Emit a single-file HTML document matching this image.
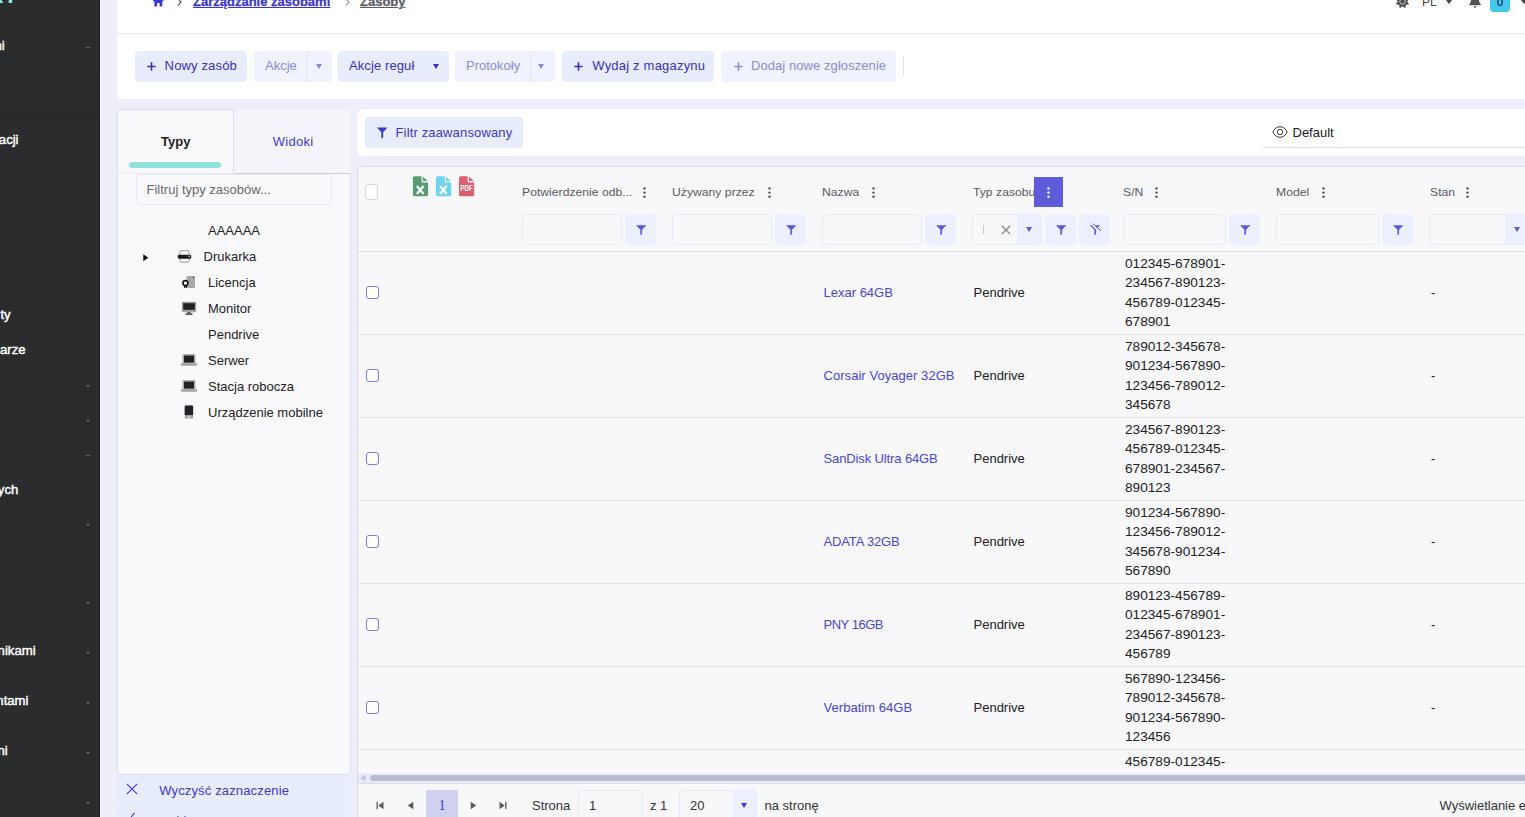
<!DOCTYPE html>
<html lang="pl">
<head>
<meta charset="utf-8">
<title>Zasoby</title>
<style>
*{box-sizing:border-box;margin:0;padding:0}
html,body{width:1525px;height:817px;overflow:hidden}
body{position:relative;background:#edeef7;font-family:"Liberation Sans",sans-serif;font-size:13px;color:#222;}
.abs{position:absolute}
/* sidebar */
#sidebar{position:absolute;left:0;top:0;width:100px;height:817px;background:#2b2c2e;overflow:hidden;box-shadow:inset -1px 0 0 #1d1e20}
#sidebar .t{position:absolute;white-space:nowrap;color:#fff;font-weight:normal;-webkit-text-stroke:0.45px #fff;font-size:13.700px;line-height:15.500px;transform:scaleX(0.96);transform-origin:100% 50%}
#sidebar .c{position:absolute;left:86px;width:0;height:0;border-left:2.500px solid transparent;border-right:2.500px solid transparent;border-top:2.500px solid #6f7072}
/* top panel */
#top{position:absolute;left:117px;top:0;width:1408px;height:99px;background:#fff;border-bottom-left-radius:4px;overflow:hidden}
#top .hr{position:absolute;left:0;top:33px;width:1408px;height:1px;background:#e3e3e3}
.bc{position:absolute;top:-6px;-webkit-text-stroke:0.25px currentColor;font-weight:bold;font-size:13px;line-height:16px;white-space:nowrap;text-decoration:underline;text-underline-offset:1px}
.btn{position:absolute;top:51px;height:31px;border-radius:4px;background:#e8edfd;color:#3431c4;font-size:13px;line-height:31px;white-space:nowrap}
.btn.dis{background:#f0f2fe;color:#8b8bdb}
.btn span{position:absolute;top:-1px}
.btn .split{position:absolute;top:0;width:1px;height:31px;background:#e6e8f8}
.caret{position:absolute;width:0;height:0;border-left:3.5px solid transparent;border-right:3.5px solid transparent;border-top:5px solid #3431c4}
.dis .caret{border-top-color:#8b8bdb}
.plus{position:absolute;width:9px;height:9px}
.plus:before{content:"";position:absolute;left:0.200px;top:3.600px;width:8.600px;height:1.700px;background:currentColor}
.plus:after{content:"";position:absolute;left:3.650px;top:0.200px;width:1.700px;height:8.600px;background:currentColor}

/* left panel */
#lp{position:absolute;left:117px;top:173px;width:234px;height:602px;background:#f9f9fc;border:1px solid #d9dcfb;border-radius:0 0 4px 4px}
#tab1{position:absolute;left:117px;top:109px;width:117px;height:65px;background:#f9f9fc;border:1px solid #d9dcfb;border-bottom:none;border-radius:4px 4px 0 0}
#tab2{position:absolute;left:234px;top:110px;width:117px;height:64px;background:#f4f4fa;border-bottom:1px solid #cfcfd4;border-radius:0 4px 0 0}
.tabt{position:absolute;top:134px;font-size:13px;line-height:16px;white-space:nowrap}
#tfilter{position:absolute;left:136px;top:174px;width:196px;height:31px;border:1px solid #e5e8fc;border-radius:4px;background:#f9f9fc;color:#68686e;font-size:13px;line-height:29px;padding-left:9.500px}
.tr{position:absolute;font-size:13px;line-height:16px;white-space:nowrap;color:#222}
.lbtn{position:absolute;left:117px;width:234px;background:#e8edfd;border-radius:4px;color:#3b38cc;font-size:13px}

/* filter panel */
#fp{position:absolute;left:357px;top:109px;width:1168px;height:47px;background:#fff;border-radius:6px 0 0 6px}
/* grid */
#grid{position:absolute;left:357px;top:166px;width:1180px;height:660px;background:#f8f8fb;border:1px solid #d9d9de;border-radius:5px 0 0 0}
.hl{position:absolute;left:358px;width:1167px;height:1px;background:#e4e4e8}
.ht{position:absolute;top:183.500px;font-size:11.200px;line-height:16px;color:#5a5a60;white-space:nowrap;transform-origin:0 0;transform:scaleX(1.09)}
.kb{position:absolute;top:187px;width:3px;height:11px}
.kb i{position:absolute;left:0;width:2.400px;height:2.400px;border-radius:50%;background:#4b4b50}
.fi{position:absolute;top:214px;height:31px;border:1px solid #e7eafc;border-radius:4px;background:#f8f8fb}
.fb{position:absolute;top:214px;width:31px;height:31px;border-radius:5px;background:#eceffd}
.fb svg{position:absolute;left:7.500px;top:7.500px}
.cb{position:absolute;left:366px;width:13px;height:13px;border:1px solid #7d7de6;border-radius:3px;background:#fff}
.ct{position:absolute;font-size:13px;line-height:16px;white-space:nowrap;color:#222}
.lnk{color:#4a46d2}
.sn{position:absolute;left:1124.900px;font-size:12.300px;line-height:19.330px;color:#222;white-space:nowrap;transform-origin:0 0;transform:scaleX(1.110);margin-top:0.400px}
.pg{position:absolute;font-size:13px;line-height:16px;color:#333;white-space:nowrap;top:798px}
</style>
</head>
<body>

<div id="sidebar">
  <div class="abs" style="left:0;top:75px;width:97px;height:44px;background:#292a2c"></div>
  <svg class="abs" style="left:0;top:0" width="14" height="4" viewBox="0 0 14 4"><path d="M0 0H1.6L3.2 3H0Z" fill="#8fe6e0"/><rect x="8.6" y="0" width="3.6" height="3" fill="#8fe6e0"/></svg>
  <div class="t" style="right:95px;top:38px">ni</div><i class="c" style="top:46.500px"></i>
  <div class="t" style="right:81px;top:132px">acji</div>
  <div class="t" style="right:89px;top:307px">ty</div>
  <div class="t" style="right:74.500px;top:342px">arze</div>
  <i class="c" style="top:384.500px"></i>
  <i class="c" style="top:419.500px"></i>
  <i class="c" style="top:454.500px"></i>
  <div class="t" style="right:82px;top:482px">ych</div>
  <i class="c" style="top:523.500px"></i>
  <i class="c" style="top:601.500px"></i>
  <div class="t" style="right:64px;top:643px">nikami</div><i class="c" style="top:651.500px"></i>
  <div class="t" style="right:72px;top:693px">ntami</div><i class="c" style="top:701.500px"></i>
  <div class="t" style="right:92px;top:743px">ni</div><i class="c" style="top:751.500px"></i>
  <i class="c" style="top:801.500px"></i>
</div>
<div class="abs" style="left:100px;top:0;width:1px;height:817px;background:#f7f7fb"></div>

<div id="top"><div class="hr"></div></div>
<!-- breadcrumb -->
<svg class="abs" style="left:152px;top:-6px" width="13" height="13" viewBox="0 0 13 13"><path d="M6.25 1L0.5 7.300H2.400V12.600H5.100V9H7.600V12.600H10.300V7.300H12Z" fill="#3a36d0"/></svg>
<svg class="abs" style="left:176.500px;top:-2px" width="5" height="9" viewBox="0 0 5 9"><path d="M0.8 0.6L4 4 0.8 7.6" fill="none" stroke="#444" stroke-width="1.1"/></svg>
<div class="bc" style="left:193px;color:#3a36d0">Zarządzanie zasobami</div>
<svg class="abs" style="left:344.500px;top:-2px" width="5" height="9" viewBox="0 0 5 9"><path d="M0.8 0.6L4 4 0.8 7.6" fill="none" stroke="#8f8fb0" stroke-width="1.1"/></svg>
<div class="bc" style="left:360px;color:#5c5c66">Zasoby</div>

<!-- top right -->
<svg class="abs" style="left:1394.950px;top:-5.900px" width="15" height="15" viewBox="0 0 15 15"><path d="M10.29 14.24L10.82 10.82L14.24 10.29L12.20 7.50L14.24 4.71L10.82 4.18L10.29 0.76L7.50 2.80L4.71 0.76L4.18 4.18L0.76 4.71L2.80 7.50L0.76 10.29L4.18 10.82L4.71 14.24L7.50 12.20Z" fill="#4a4a4e"/><circle cx="7.500" cy="7.500" r="2.750" fill="none" stroke="#e9e9ee" stroke-width="0.900"/></svg>
<div class="abs" style="left:1422px;top:-6px;font-size:12px;line-height:16px;color:#444">PL</div>
<i class="caret" style="left:1446px;top:0;border-top-color:#444;border-left-width:3px;border-right-width:3px;border-top-width:4px"></i>
<svg class="abs" style="left:1469px;top:-6px" width="12" height="14" viewBox="0 0 13 14" preserveAspectRatio="none"><path d="M6.500 0C3.800 0 2.300 2 2.300 4.500c0 3-.9 4.600-2 5.700V11.300H12.700V10.200c-1.100-1.100-2-2.700-2-5.700C10.700 2 9.200 0 6.500 0Z" fill="#505356"/><path d="M5 12.200h3a1.500 1.500 0 0 1-3 0Z" fill="#505356"/></svg>
<div class="abs" style="left:1490px;top:-8px;width:20px;height:20px;border-radius:4px;background:#45c8ee;color:#152a5a;font-size:11px;line-height:20px;text-align:center;-webkit-text-stroke:0.300px #152a5a">0</div>
<i class="caret" style="left:1521px;top:0;border-top-color:#444;border-left-width:3px;border-right-width:3px;border-top-width:4px"></i>

<!-- toolbar -->
<div class="btn" style="left:135px;width:112px"><svg class="abs" style="left:12px;top:11px" width="9" height="9" viewBox="0 0 9 9"><path d="M0.300 4.500H8.700M4.500 0.300V8.700" stroke="currentColor" stroke-width="1.600" fill="none"/></svg><span style="left:29.600px;letter-spacing:0.150px">Nowy zasób</span></div>
<div class="btn dis" style="left:254px;width:78px"><span style="left:11px">Akcje</span><i class="split" style="left:53px"></i><i class="caret" style="left:62px;top:13px"></i></div>
<div class="btn" style="left:338px;width:111px"><span style="left:11px;letter-spacing:0.100px">Akcje reguł</span><i class="caret" style="left:95px;top:13px"></i></div>
<div class="btn dis" style="left:455px;width:100px"><span style="left:11px">Protokoły</span><i class="split" style="left:75px"></i><i class="caret" style="left:83px;top:13px"></i></div>
<div class="btn" style="left:562px;width:152px"><svg class="abs" style="left:12px;top:11px" width="9" height="9" viewBox="0 0 9 9"><path d="M0.300 4.500H8.700M4.500 0.300V8.700" stroke="currentColor" stroke-width="1.600" fill="none"/></svg><span style="left:30.300px;letter-spacing:0.200px">Wydaj z magazynu</span></div>
<div class="btn dis" style="left:721px;width:175px"><svg class="abs" style="left:13px;top:11px" width="9" height="9" viewBox="0 0 9 9"><path d="M0.300 4.500H8.700M4.500 0.300V8.700" stroke="currentColor" stroke-width="1.600" fill="none"/></svg><span style="left:30px;letter-spacing:0.070px">Dodaj nowe zgłoszenie</span></div>
<div class="abs" style="left:903px;top:56px;width:1px;height:20px;background:#e2e2ea"></div>


<!-- left panel -->
<div id="lp"></div>
<div id="tab2"></div>
<div id="tab1"></div>
<div class="abs" style="left:118px;top:173px;width:116px;height:1px;background:#ececf3"></div>
<div class="tabt" style="left:161px;font-weight:bold;color:#1c1c1e">Typy</div>
<div class="tabt" style="left:272.800px;letter-spacing:0.250px;color:#3f3ccf">Widoki</div>
<div class="abs" style="left:129px;top:162px;width:92px;height:6px;border-radius:3px;background:#8de2de"></div>
<div id="tfilter">Filtruj typy zasobów...</div>

<div class="tr" style="left:208px;top:223px">AAAAAA</div>
<svg class="abs" style="left:143px;top:254px" width="6" height="8" viewBox="0 0 6 8"><path d="M0.3 0.300L5.300 3.800 0.300 7.300Z" fill="#111"/></svg>
<div class="tr" style="left:203.500px;top:249px">Drukarka</div>
<div class="tr" style="left:208px;top:275px">Licencja</div>
<div class="tr" style="left:208px;top:301px">Monitor</div>
<div class="tr" style="left:208px;top:327px">Pendrive</div>
<div class="tr" style="left:208px;top:353px">Serwer</div>
<div class="tr" style="left:208px;top:379px">Stacja robocza</div>
<div class="tr" style="left:208px;top:405px">Urządzenie mobilne</div>

<!-- tree icons -->
<svg class="abs" style="left:177px;top:249px" width="15" height="14" viewBox="0 0 15 14"><rect x="3" y="1.600" width="9" height="5" rx="1.200" fill="#fbfbfd" stroke="#adadb1" stroke-width="1.100"/><rect x="3" y="8.600" width="9" height="4.500" rx="1.200" fill="#fbfbfd" stroke="#adadb1" stroke-width="1.100"/><rect x="0.800" y="5.700" width="13.400" height="4.100" rx="1.200" fill="#1d1e22"/><circle cx="12.100" cy="7.300" r="0.800" fill="#fff"/></svg>
<svg class="abs" style="left:181px;top:275px" width="15" height="14" viewBox="0 0 15 14"><path d="M5.500 1H12L14 3V13H5.500Z" fill="#a9a9ab"/><path d="M12 1L14 3H12Z" fill="#2a2d4a"/><circle cx="4.400" cy="8.100" r="2.500" fill="#fff" stroke="#17181c" stroke-width="1.600"/><path d="M3 10.500V13.300L4.500 12.300 6 13.300V10.500Z" fill="#17181c"/></svg>
<svg class="abs" style="left:181px;top:301px" width="16" height="14" viewBox="0 0 16 14"><rect x="0.800" y="0.800" width="14.400" height="10.400" rx="1" fill="#a3a3a6"/><rect x="2.200" y="2.200" width="11.600" height="6.600" fill="#202227"/><path d="M6.500 11.200H9.500L10 12.500H6Z" fill="#2a2b2f"/><rect x="4.300" y="12.400" width="7.400" height="1.300" rx="0.600" fill="#2a2b2f"/></svg>
<svg class="abs" style="left:180px;top:353px" width="18" height="13" viewBox="0 0 18 13"><rect x="2.500" y="1" width="13" height="9.500" rx="1.200" fill="#b0b0b3"/><rect x="4" y="2.600" width="10" height="7" fill="#202227"/><path d="M0.800 10.200H17.200V11.300Q17.200 12.800 15.700 12.800H2.300Q0.800 12.800 0.800 11.300Z" fill="#a3a3a6"/></svg>
<svg class="abs" style="left:180px;top:379px" width="18" height="13" viewBox="0 0 18 13"><rect x="2.500" y="1" width="13" height="9.500" rx="1.200" fill="#b0b0b3"/><rect x="4" y="2.600" width="10" height="7" fill="#202227"/><path d="M0.800 10.200H17.200V11.300Q17.200 12.800 15.700 12.800H2.300Q0.800 12.800 0.800 11.300Z" fill="#a3a3a6"/></svg>
<svg class="abs" style="left:184px;top:405px" width="10" height="14" viewBox="0 0 10 14"><rect x="0.700" y="0.600" width="8.400" height="13" rx="1.200" fill="#a3a3a6"/><path d="M0.700 1.800Q0.700 0.600 1.900 0.600H7.900Q9.100 0.600 9.100 1.800V10H0.700Z" fill="#202227"/><rect x="3.600" y="11" width="2.600" height="1.600" rx="0.500" fill="#d6d6d8"/></svg>

<!-- left bottom buttons -->
<div class="lbtn" style="top:775px;height:30.500px"></div>
<div class="lbtn" style="top:806px;height:31px"></div>
<svg class="abs" style="left:126px;top:783px" width="12" height="12" viewBox="0 0 12 12"><path d="M0.800 0.800L11.200 11.200M11.200 0.800L0.800 11.200" stroke="#3b38cc" stroke-width="1.100" fill="none"/></svg>
<div class="abs" style="left:159.200px;top:783px;font-size:13px;line-height:16px;color:#3b38cc;white-space:nowrap;letter-spacing:0.150px">Wyczyść zaznaczenie</div>
<svg class="abs" style="left:123px;top:812px" width="12" height="12" viewBox="0 0 12 12"><path d="M0.500 7L4 10.500 11.500 0.800" stroke="#3b38cc" stroke-width="1.100" fill="none"/></svg>
<div class="abs" style="left:159.200px;top:815.600px;font-size:13px;line-height:16px;color:#3b38cc;white-space:nowrap;letter-spacing:0.300px">Zwiń wszystko</div><div class="abs" style="left:177px;top:816px;width:1.500px;height:1px;background:#8f8fe0"></div><div class="abs" style="left:184.300px;top:816px;width:1.500px;height:1px;background:#8f8fe0"></div>


<!-- filter panel -->
<div id="fp"></div>
<div class="abs" style="left:365px;top:117px;width:158px;height:31px;border-radius:4px;background:#e8edfd"></div>
<svg class="abs" style="left:374px;top:125px" width="16" height="16" viewBox="0 0 16 16"><path d="M3 2.500H13.400L9.200 7.200V12.300L7.300 13.800V7.200Z" fill="#3b38cc"/></svg>
<div class="abs" style="left:395.500px;top:125px;font-size:13px;line-height:16px;color:#3b38cc;white-space:nowrap;letter-spacing:0.150px">Filtr zaawansowany</div>
<svg class="abs" style="left:1272px;top:125px" width="16" height="14" viewBox="0 0 16 14"><path d="M0.800 7C2.500 3.500 5 1.700 8 1.700S13.500 3.500 15.200 7C13.500 10.500 11 12.300 8 12.300S2.500 10.500 0.800 7Z" fill="none" stroke="#333" stroke-width="1"/><circle cx="8" cy="7" r="2.700" fill="none" stroke="#333" stroke-width="1"/></svg>
<div class="abs" style="left:1292.500px;top:124.500px;font-size:13px;line-height:16px;color:#222;white-space:nowrap">Default</div>
<div class="abs" style="left:1263px;top:147px;width:262px;height:1px;background:#dde1e7"></div>

<!-- grid -->
<div id="grid"></div>
<div class="hl" style="top:251px;background:#dcdce0"></div>
<div class="abs" style="left:365px;top:184px;width:13px;height:16px;border:1px solid #d6d6da;border-radius:3px;background:#fff"></div>
<svg class="abs" style="left:412px;top:176px" width="17" height="21" viewBox="0 0 17 21"><g transform="translate(0.5 0) scale(1.027 1)"><path d="M2 0.300H8.800V5.200Q8.800 6.600 10.200 6.600H15.200V18.700Q15.200 20.300 13.600 20.300H2Q0.400 20.300 0.400 18.700V1.900Q0.400 0.300 2 0.300Z" fill="#579c72"/><path d="M10 0.500L14.700 5.100H10Z" fill="#579c72"/><path d="M4.300 10L10.700 18M10.700 10L4.300 18" stroke="#fff" stroke-width="2.100" fill="none"/></g></svg>
<svg class="abs" style="left:435px;top:176px" width="17" height="21" viewBox="0 0 17 21"><g transform="translate(0.6 0) scale(1.027 1)"><path d="M2 0.300H8.800V5.200Q8.800 6.600 10.200 6.600H15.200V18.700Q15.200 20.300 13.600 20.300H2Q0.400 20.300 0.400 18.700V1.900Q0.400 0.300 2 0.300Z" fill="#6dd3f0"/><path d="M10 0.500L14.700 5.100H10Z" fill="#6dd3f0"/><path d="M4.300 10L10.700 18M10.700 10L4.300 18" stroke="#fff" stroke-width="2.100" fill="none"/></g></svg>
<svg class="abs" style="left:458px;top:176px" width="17" height="21" viewBox="0 0 17 21"><g transform="translate(0.6 0) scale(1.027 1)"><path d="M2 0.300H8.800V5.200Q8.800 6.600 10.200 6.600H15.200V18.700Q15.200 20.300 13.600 20.300H2Q0.400 20.300 0.400 18.700V1.900Q0.400 0.300 2 0.300Z" fill="#dc5f6b"/><path d="M10 0.500L14.700 5.100H10Z" fill="#dc5f6b"/><text x="7.800" y="15.500" font-family="Liberation Sans" font-weight="bold" font-size="8.600" fill="#fff" text-anchor="middle" textLength="12.200" lengthAdjust="spacingAndGlyphs">PDF</text></g></svg>
<div class="ht" style="left:522.3px">Potwierdzenie odb...</div><svg class="abs" style="left:643.2px;top:186.700px" width="3" height="12" viewBox="0 0 3 12"><circle cx="1.500" cy="1.400" r="1.200" fill="#505056"/><circle cx="1.500" cy="5.600" r="1.200" fill="#505056"/><circle cx="1.500" cy="9.800" r="1.200" fill="#505056"/></svg>
<div class="ht" style="left:672.3px">Używany przez</div><svg class="abs" style="left:767.7px;top:186.700px" width="3" height="12" viewBox="0 0 3 12"><circle cx="1.500" cy="1.400" r="1.200" fill="#505056"/><circle cx="1.500" cy="5.600" r="1.200" fill="#505056"/><circle cx="1.500" cy="9.800" r="1.200" fill="#505056"/></svg>
<div class="ht" style="left:822.3px">Nazwa</div><svg class="abs" style="left:872.2px;top:186.700px" width="3" height="12" viewBox="0 0 3 12"><circle cx="1.500" cy="1.400" r="1.200" fill="#505056"/><circle cx="1.500" cy="5.600" r="1.200" fill="#505056"/><circle cx="1.500" cy="9.800" r="1.200" fill="#505056"/></svg>
<div class="ht" style="left:972.8px">Typ zasobu</div>
<div class="ht" style="left:1123.3px">S/N</div><svg class="abs" style="left:1155.2px;top:186.700px" width="3" height="12" viewBox="0 0 3 12"><circle cx="1.500" cy="1.400" r="1.200" fill="#505056"/><circle cx="1.500" cy="5.600" r="1.200" fill="#505056"/><circle cx="1.500" cy="9.800" r="1.200" fill="#505056"/></svg>
<div class="ht" style="left:1276.3px">Model</div><svg class="abs" style="left:1322.2px;top:186.700px" width="3" height="12" viewBox="0 0 3 12"><circle cx="1.500" cy="1.400" r="1.200" fill="#505056"/><circle cx="1.500" cy="5.600" r="1.200" fill="#505056"/><circle cx="1.500" cy="9.800" r="1.200" fill="#505056"/></svg>
<div class="ht" style="left:1429.8px">Stan</div><svg class="abs" style="left:1466.2px;top:186.700px" width="3" height="12" viewBox="0 0 3 12"><circle cx="1.500" cy="1.400" r="1.200" fill="#505056"/><circle cx="1.500" cy="5.600" r="1.200" fill="#505056"/><circle cx="1.500" cy="9.800" r="1.200" fill="#505056"/></svg>
<div class="abs" style="left:1034px;top:177px;width:29px;height:30px;background:#5f5cd9"></div><svg class="abs" style="left:1046.700px;top:186.700px" width="3" height="12" viewBox="0 0 3 12"><circle cx="1.500" cy="1.400" r="1.200" fill="#fff"/><circle cx="1.500" cy="5.600" r="1.200" fill="#fff"/><circle cx="1.500" cy="9.800" r="1.200" fill="#fff"/></svg>
<div class="fi" style="left:522px;width:100px"></div><div class="fb" style="left:625px"><svg width="16" height="16" viewBox="0 0 16 16"><path d="M3 3.200H13.400L9.100 7.700V12L7.400 13.500V7.700Z" fill="#5a5ad6"/></svg></div>
<div class="fi" style="left:672px;width:100px"></div><div class="fb" style="left:775px"><svg width="16" height="16" viewBox="0 0 16 16"><path d="M3 3.200H13.400L9.100 7.700V12L7.400 13.500V7.700Z" fill="#5a5ad6"/></svg></div>
<div class="fi" style="left:822px;width:100px"></div><div class="fb" style="left:925px"><svg width="16" height="16" viewBox="0 0 16 16"><path d="M3 3.200H13.400L9.100 7.700V12L7.400 13.500V7.700Z" fill="#5a5ad6"/></svg></div>
<div class="fi" style="left:1123px;width:103px"></div><div class="fb" style="left:1229px"><svg width="16" height="16" viewBox="0 0 16 16"><path d="M3 3.200H13.400L9.100 7.700V12L7.400 13.500V7.700Z" fill="#5a5ad6"/></svg></div>
<div class="fi" style="left:1276px;width:103px"></div><div class="fb" style="left:1382px"><svg width="16" height="16" viewBox="0 0 16 16"><path d="M3 3.200H13.400L9.100 7.700V12L7.400 13.500V7.700Z" fill="#5a5ad6"/></svg></div>
<div class="fi" style="left:972px;width:70px;overflow:hidden"><div style="position:absolute;right:0;top:0;width:24px;height:29px;background:#eceffd"></div></div><div class="abs" style="left:983px;top:225px;width:1px;height:9px;background:#c9c9cf"></div><svg class="abs" style="left:1000.600px;top:225px" width="10" height="10" viewBox="0 0 10 10"><path d="M1 1L9 9M9 1L1 9" stroke="#8a8a90" stroke-width="1.350" fill="none"/></svg><i class="caret" style="left:1026px;top:227px;border-top-color:#5a5ad6"></i><div class="fb" style="left:1045px"><svg width="16" height="16" viewBox="0 0 16 16"><path d="M3 3.200H13.400L9.100 7.700V12L7.400 13.500V7.700Z" fill="#5a5ad6"/></svg></div><div class="fb" style="left:1079px"><svg width="16" height="16" viewBox="0 0 16 16"><path d="M2.500 3.200H4.300L9.100 7.700V12L7.400 13.500V7.700Z" fill="#5a5ad6"/><path d="M7.800 3.200H13L10.400 5.900Z" fill="#5a5ad6"/><path d="M5.800 1.600L14 8.900" stroke="#5a5ad6" stroke-width="1" fill="none"/></svg></div>
<div class="fi" style="left:1429px;width:110px;overflow:hidden"><div style="position:absolute;left:75px;top:0;width:40px;height:29px;background:#eceffd"></div></div><i class="caret" style="left:1514px;top:227px;border-top-color:#5a5ad6"></i>
<div class="hl" style="top:334px"></div><div class="cb" style="top:286px"></div><div class="ct lnk" style="left:823.500px;top:285px">Lexar 64GB</div><div class="ct" style="left:973.500px;top:285px">Pendrive</div><div class="sn" style="top:254.5px">012345-678901-<br>234567-890123-<br>456789-012345-<br>678901</div><div class="ct" style="left:1431px;top:285px">-</div>
<div class="hl" style="top:417px"></div><div class="cb" style="top:369px"></div><div class="ct lnk" style="left:823.500px;top:368px;letter-spacing:0.050px">Corsair Voyager 32GB</div><div class="ct" style="left:973.500px;top:368px">Pendrive</div><div class="sn" style="top:337.5px">789012-345678-<br>901234-567890-<br>123456-789012-<br>345678</div><div class="ct" style="left:1431px;top:368px">-</div>
<div class="hl" style="top:500px"></div><div class="cb" style="top:452px"></div><div class="ct lnk" style="left:823.500px;top:451px;letter-spacing:-0.120px">SanDisk Ultra 64GB</div><div class="ct" style="left:973.500px;top:451px">Pendrive</div><div class="sn" style="top:420.5px">234567-890123-<br>456789-012345-<br>678901-234567-<br>890123</div><div class="ct" style="left:1431px;top:451px">-</div>
<div class="hl" style="top:583px"></div><div class="cb" style="top:535px"></div><div class="ct lnk" style="left:823.500px;top:534px;letter-spacing:-0.150px">ADATA 32GB</div><div class="ct" style="left:973.500px;top:534px">Pendrive</div><div class="sn" style="top:503.5px">901234-567890-<br>123456-789012-<br>345678-901234-<br>567890</div><div class="ct" style="left:1431px;top:534px">-</div>
<div class="hl" style="top:666px"></div><div class="cb" style="top:618px"></div><div class="ct lnk" style="left:823.500px;top:617px;letter-spacing:-0.480px">PNY 16GB</div><div class="ct" style="left:973.500px;top:617px">Pendrive</div><div class="sn" style="top:586.5px">890123-456789-<br>012345-678901-<br>234567-890123-<br>456789</div><div class="ct" style="left:1431px;top:617px">-</div>
<div class="hl" style="top:749px"></div><div class="cb" style="top:701px"></div><div class="ct lnk" style="left:823.500px;top:700px;letter-spacing:0.040px">Verbatim 64GB</div><div class="ct" style="left:973.500px;top:700px">Pendrive</div><div class="sn" style="top:669.5px">567890-123456-<br>789012-345678-<br>901234-567890-<br>123456</div><div class="ct" style="left:1431px;top:700px">-</div>
<div class="sn" style="top:752.500px">456789-012345-</div>
<div class="abs" style="left:358px;top:773px;width:1167px;height:10px;background:#e6eafc"></div><div class="abs" style="left:358px;top:783px;width:1167px;height:1px;background:#dcdce0"></div><div class="abs" style="left:358px;top:784px;width:1167px;height:33px;background:#f8f8fb"></div><svg class="abs" style="left:360px;top:774px" width="6" height="8" viewBox="0 0 6 8"><path d="M5.500 0.500V7.500L0.500 4Z" fill="#c3c5d3"/></svg><div class="abs" style="left:370px;top:775px;width:1170px;height:6px;border-radius:3px;background:#b8bbcf"></div>
<svg class="abs" style="left:376px;top:801px" width="8" height="9" viewBox="0 0 8 9"><rect x="0.500" y="0.800" width="1.300" height="7.400" fill="#5a5a60"/><path d="M7.500 0.800V8.200L2.300 4.500Z" fill="#5a5a60"/></svg><svg class="abs" style="left:407px;top:801px" width="7" height="9" viewBox="0 0 7 9"><path d="M6.300 0.800V8.200L0.800 4.500Z" fill="#5a5a60"/></svg><div class="abs" style="left:426px;top:790px;width:32px;height:30px;background:#d0d0f1;color:#3a36d0;font-family:'Liberation Serif',serif;font-size:14px;line-height:31px;text-align:center">1</div><svg class="abs" style="left:470px;top:801px" width="7" height="9" viewBox="0 0 7 9"><path d="M0.700 0.800V8.200L6.200 4.500Z" fill="#5a5a60"/></svg><svg class="abs" style="left:499px;top:801px" width="8" height="9" viewBox="0 0 8 9"><rect x="6.200" y="0.800" width="1.300" height="7.400" fill="#5a5a60"/><path d="M0.500 0.800V8.200L5.700 4.500Z" fill="#5a5a60"/></svg>
<div class="pg" style="left:532px">Strona</div><div class="abs" style="left:578px;top:790px;width:65px;height:31px;border:1px solid #e7eafc;border-radius:4px;background:#f8f8fb"></div><div class="pg" style="left:589px">1</div><div class="pg" style="left:650px">z 1</div><div class="abs" style="left:679px;top:790px;width:78px;height:31px;border:1px solid #e7eafc;border-radius:4px;background:#f8f8fb;overflow:hidden"><div style="position:absolute;right:0;top:0;width:23px;height:29px;background:#eceffd"></div></div><div class="pg" style="left:690px">20</div><i class="caret" style="left:740.500px;top:803px;border-top-color:#3a36d0;border-left-width:3.800px;border-right-width:3.800px;border-top-width:5.500px"></i><div class="pg" style="left:764.500px">na stronę</div><div class="pg" style="left:1439.500px">Wyświetlanie elementów</div>

</body>
</html>
